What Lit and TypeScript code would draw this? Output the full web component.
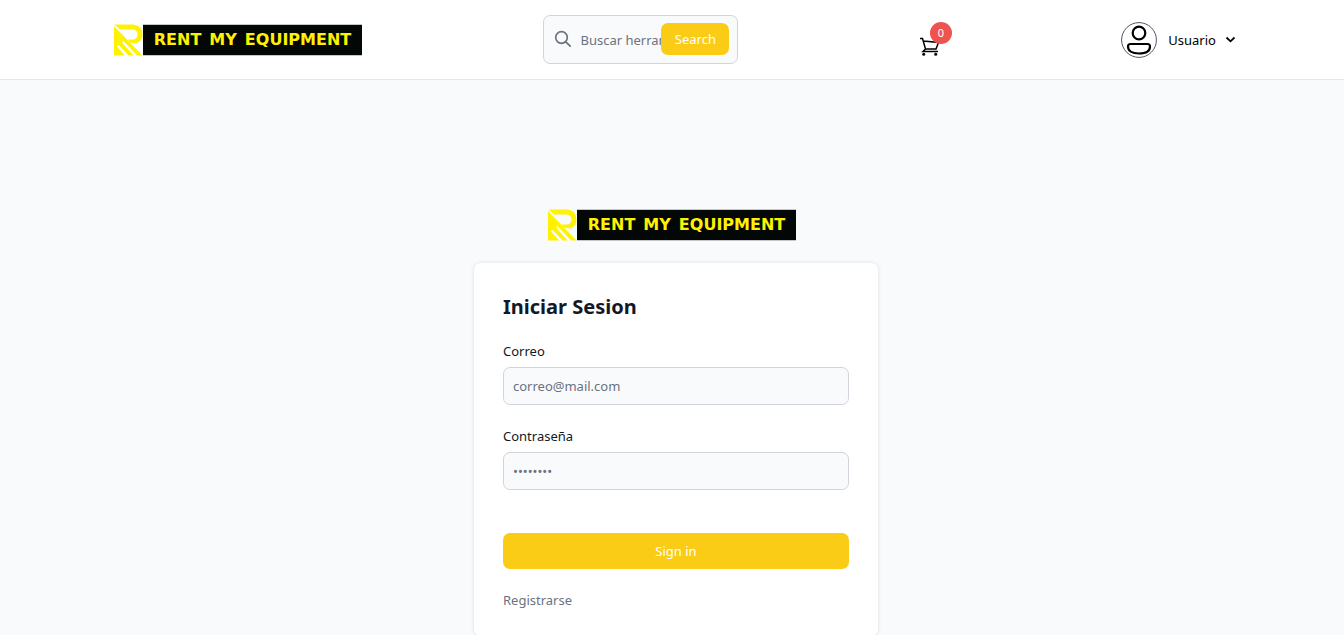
import { LitElement, html, css } from "lit";
import { customElement } from "lit/decorators.js";

@customElement("brand-logo")
class BrandLogo extends LitElement {
  static styles = css`
    :host { display: block; }
    .logo { display: flex; width: 248px; height: 32px; text-decoration: none; }
    .mark { flex: none; width: 29px; height: 32px; }
    .plate {
      flex: 1; box-sizing: border-box; display: flex; align-items: center; justify-content: center; gap: 8px;
      background: #030706; color: #fff200; border: solid #c5c7c9; border-width: 1px 0;
      font: bold 16px/30px "DejaVu Sans", sans-serif; white-space: nowrap;
    }
  `;
  render() {
    return html`<a class="logo" href="#" aria-label="Rent My Equipment">
      <svg class="mark" viewBox="0 0 29 32" aria-hidden="true">
        <g fill="#fff200">
          <path d="M0.500 0.500H18C24.500 0.500 28.500 4.500 28.500 10.500C28.500 15 26 18 22 19.500L16 18.500L13.500 15.500H18C21.500 15.500 23.500 13.500 23.500 10.500C23.500 7.500 21.500 5.500 18 5.500H6Z"/>
          <path fill-rule="evenodd" d="M0 2L28.500 31.500H0ZM8 18.500L9.500 17L23 31.500H19.500ZM3 22.500L4.800 21L14.500 31.500H11Z"/>
        </g>
      </svg>
      <span class="plate"><span>RENT</span><span>MY</span><span>EQUIPMENT</span></span>
    </a>`;
  }
}

@customElement("app-root")
class AppRoot extends LitElement {
  static styles = css`
    :host { display: block; min-height: 100vh; background: #f9fafb; color: #111827; font: 13px/20px "Noto Sans", sans-serif; }
    * { box-sizing: border-box; }
    button, input { font: inherit; margin: 0; }
    button { cursor: pointer; border: 0; }
    .header { background: #fff; border-bottom: 1px solid #e5e7eb; }
    .bar { display: flex; align-items: center; justify-content: space-between; height: 79px; padding: 0 108px 0 114px; }
    .search { position: relative; width: 195px; }
    .search-icon { position: absolute; left: 11px; top: 15px; width: 18px; height: 18px; }
    .search-input {
      display: block; width: 100%; height: 49px; padding: 0 8px 0 36px; border: 1px solid #d1d5db;
      border-radius: 7px; background: #f9fafb; color: #111827;
    }
    ::placeholder { color: #6b7280; opacity: 1; }
    .primary { background: #facc15; color: #fff; border-radius: 7px; }
    .search-button { position: absolute; right: 9px; top: 8px; width: 68px; height: 32px; padding: 0; }
    .cart { position: relative; display: block; width: 20px; height: 20px; margin-top: 14px; color: #000; }
    .cart-icon { display: block; width: 20px; height: 20px; }
    .badge {
      position: absolute; left: 10px; top: -15px; width: 22px; height: 22px; border-radius: 50%;
      background: #ef5350; color: #fff; font-size: 11px; line-height: 22px; text-align: center;
    }
    .user { display: flex; align-items: center; padding: 0; background: none; color: #000; }
    .avatar { width: 36px; height: 36px; margin-right: 11px; }
    .chevron { width: 11px; height: 11px; margin-left: 9px; }
    .main { display: flex; flex-direction: column; align-items: center; padding: 129px 16px 0; }
    .card {
      width: 100%; max-width: 404px; margin: 22px 0 0 8px; padding: 29px 29px 26px; border-radius: 7px;
      background: #fff; box-shadow: 0 0 4px rgba(0, 0, 0, 0.12);
    }
    .title { margin: 0 0 20px; font-size: 20px; line-height: 29px; font-weight: 700; }
    .form { display: flex; flex-direction: column; }
    .label { margin-bottom: 6px; }
    .field {
      width: 100%; height: 38px; margin-bottom: 21px; padding: 0 9px; border: 1px solid #d1d5db; border-radius: 7px;
      background: #f9fafb; color: #111827;
    }
    .submit { height: 36px; margin: 22px 0 21px; }
    .register { align-self: flex-start; color: #6b7280; text-decoration: none; }
  `;

  render() {
    return html`
      <header class="header">
        <div class="bar">
          <brand-logo></brand-logo>
          <form class="search" role="search" @submit=${(e: Event) => e.preventDefault()}>
            <svg class="search-icon" viewBox="0 0 18 18" fill="none" stroke="#6b7280" stroke-width="1.700" stroke-linecap="round" aria-hidden="true">
              <circle cx="7.500" cy="7.500" r="5.800"/><path d="M11.800 11.800L16.200 16.200"/>
            </svg>
            <input class="search-input" type="text" aria-label="Buscar herramientas" placeholder="Buscar herramientas">
            <button class="primary search-button" type="submit">Search</button>
          </form>
          <a class="cart" href="#" aria-label="Carrito">
            <svg class="cart-icon" viewBox="0 0 20 20" fill="none" stroke="currentColor" stroke-width="1.500" aria-hidden="true">
              <path d="M0 1.500H2.500L5.500 12M3.300 4L18.500 5.500L16 12H5.500L3 14.500H18"/>
              <circle cx="3.700" cy="17.200" r="1.500" fill="currentColor" stroke="none"/><circle cx="15.700" cy="17.200" r="1.500" fill="currentColor" stroke="none"/>
            </svg>
            <span class="badge">0</span>
          </a>
          <button class="user" type="button">
            <svg class="avatar" viewBox="0 0 36 36" fill="none" aria-hidden="true">
              <circle cx="18" cy="18" r="17.400" stroke="#4b5563"/>
              <g stroke="#000" stroke-width="2.200"><circle cx="18" cy="11" r="6.300"/><path d="M9.500 22H26.500Q29 22 29 24.500C29 29 25 31.500 18 31.500S7 29 7 24.500Q7 22 9.500 22Z"/></g>
            </svg>
            Usuario
            <svg class="chevron" viewBox="0 0 11 11" fill="none" stroke="#000" stroke-width="1.800" aria-hidden="true"><path d="M1.500 3.500L5.500 7.300L9.500 3.500"/></svg>
          </button>
        </div>
      </header>
      <main class="main">
        <brand-logo></brand-logo>
        <section class="card">
          <h1 class="title">Iniciar Sesion</h1>
          <form class="form" @submit=${(e: Event) => e.preventDefault()}>
            <label class="label" for="email">Correo</label>
            <input class="field" id="email" type="email" placeholder="correo@mail.com">
            <label class="label" for="password">Contraseña</label>
            <input class="field" id="password" type="password" placeholder="••••••••">
            <button class="primary submit" type="submit">Sign in</button>
            <a class="register" href="#">Registrarse</a>
          </form>
        </section>
      </main>
    `;
  }
}
